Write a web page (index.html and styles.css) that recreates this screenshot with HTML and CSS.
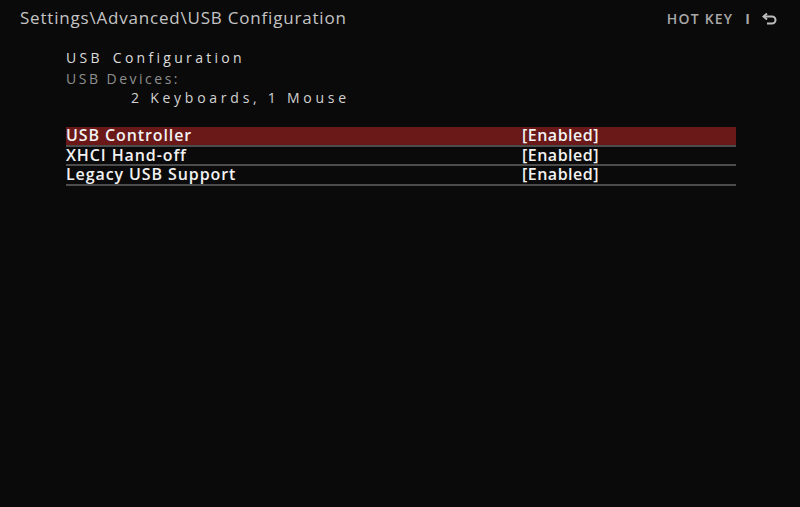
FILE: index.html
```html
<!DOCTYPE html>
<html lang="en">
<head>
    <meta charset="UTF-8">
    <title>USB Configuration</title>
    <link rel="stylesheet" href="styles.css">
</head>
<body>

    <!-- Top bar -->
    <div class="topbar">
        <div class="breadcrumb">Settings\Advanced\USB Configuration</div>
        <div class="hotkey">
            <span>HOT KEY</span>
            <span class="sep">I</span>
            <svg class="back" width="16" height="12" viewBox="0 0 16 12">
                <path d="M5 0.5 L1.5 3.5 L5 6.5" fill="none" stroke="#bdbdbd" stroke-width="2"/>
                <path d="M2 3.5 H10 A3.5 3.5 0 0 1 10 10.5 H5" fill="none" stroke="#bdbdbd" stroke-width="2"/>
            </svg>
        </div>
    </div>

    <!-- Content -->
    <div class="content">
        <div class="title">USB Configuration</div>
        <div class="subtitle">USB Devices:</div>
        <div class="devices">2 Keyboards, 1 Mouse</div>

        <div class="options">
            <div class="row selected">
                <span class="name">USB Controller</span>
                <span class="value">[Enabled]</span>
            </div>
            <div class="row">
                <span class="name">XHCI Hand-off</span>
                <span class="value">[Enabled]</span>
            </div>
            <div class="row">
                <span class="name">Legacy USB Support</span>
                <span class="value">[Enabled]</span>
            </div>
        </div>
    </div>

</body>
</html>
```

FILE: styles.css
```css
/* General */
body {
    margin: 0;
    background: #0a0a0a;
    font-family: 'Open Sans', 'Noto Sans', sans-serif;
    color: #e6e6e6;
    width: 800px;
    height: 507px;
    overflow: hidden;
}

/* Top bar */
.topbar {
    display: flex;
    justify-content: space-between;
    align-items: flex-start;
    padding: 6px 22px 0 20px;
}

.breadcrumb {
    font-size: 17px;
    color: #c4c4c4;
    letter-spacing: 0.8px;
}

.hotkey {
    display: flex;
    align-items: center;
    gap: 10px;
    font-size: 14px;
    font-weight: 600;
    color: #a8a8a8;
    padding-top: 3px;
}

.hotkey .label {
    letter-spacing: 1px;
}

.hotkey span:first-child {
    letter-spacing: 1.2px;
}

.hotkey .sep {
    margin: 0 2px;
    font-weight: 700;
}

.back {
    margin-top: 1px;
}

/* Content */
.content {
    padding: 0 64px 0 66px;
    margin-top: 20px;
}

.title {
    font-size: 14px;
    letter-spacing: 3.3px;
    color: #dcdcdc;
    line-height: 18px;
    word-spacing: 3px;
    margin-top: 2px;
}

.subtitle {
    font-size: 14px;
    color: #8f8f8f;
    letter-spacing: 2.5px;
    line-height: 18px;
    margin-top: 3px;
}

.devices {
    font-size: 14px;
    color: #d2d2d2;
    letter-spacing: 3.75px;
    line-height: 18px;
    padding-left: 65px;
    margin-top: 1px;
}

/* Options list */
.options {
    margin-top: 20px;
}

.row {
    display: flex;
    height: 17.5px;
    line-height: 17.5px;
    border-bottom: 2px solid #4c4c4c;
    font-size: 16px;
    font-weight: 600;
    color: #f2f2f2;
}

.row.selected {
    background: #6a1818;
}

.row .name {
    width: 456px;
    letter-spacing: 0.9px;
}

.row .value {
    letter-spacing: 0.5px;
}
```
